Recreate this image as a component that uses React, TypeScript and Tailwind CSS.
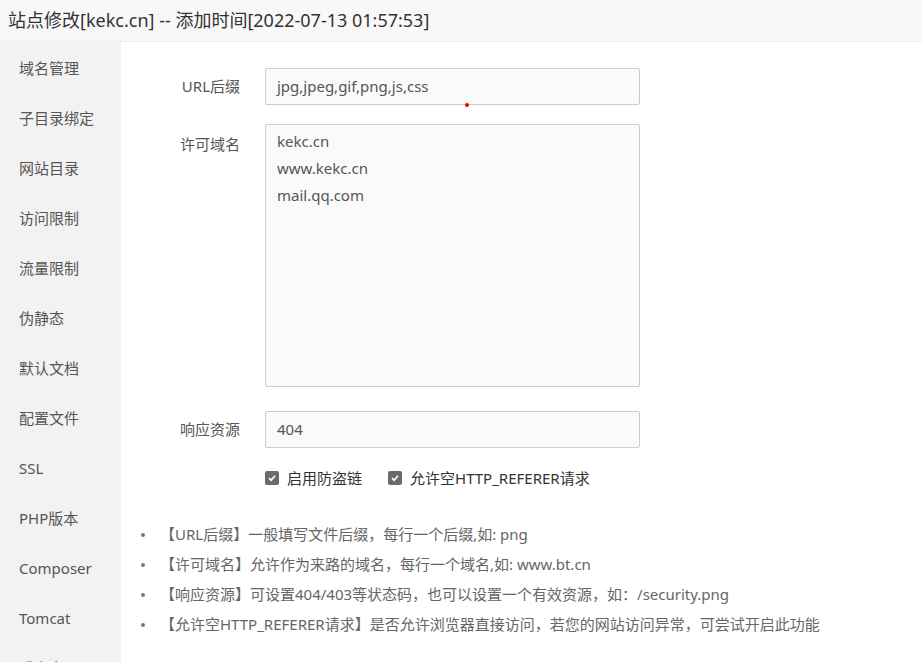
import React from 'react';

const menu = ['域名管理', '子目录绑定', '网站目录', '访问限制', '流量限制', '伪静态', '默认文档', '配置文件', 'SSL', 'PHP版本', 'Composer', 'Tomcat', '重定向', '反向代理'];

const tips = [
  '【URL后缀】一般填写文件后缀，每行一个后缀,如: png',
  '【许可域名】允许作为来路的域名，每行一个域名,如: www.bt.cn',
  '【响应资源】可设置404/403等状态码，也可以设置一个有效资源，如：/security.png',
  '【允许空HTTP_REFERER请求】是否允许浏览器直接访问，若您的网站访问异常，可尝试开启此功能',
];

const Check = () => (
  <span className="w-[14px] h-[14px] rounded-[2px] bg-[#6b6b6b] flex items-center justify-center">
    <svg width="10" height="10" viewBox="0 0 10 10">
      <path d="M2 5.2 L4.1 7.2 L8 2.8" fill="none" stroke="#fff" strokeWidth="1.7" />
    </svg>
  </span>
);

const App: React.FC = () => {
  return (
    <div className="w-[922px] h-[662px] overflow-hidden bg-white text-[#333]" style={{ fontFamily: '"Noto Sans", "Noto Sans CJK SC", sans-serif' }}>
      <div className="h-[42px] bg-[#f8f8f8] border-b border-[#eee] px-2 flex items-center text-[18px] text-[#333]">
        站点修改[kekc.cn] -- 添加时间[2022-07-13 01:57:53]
      </div>
      <div className="flex">
        <div className="w-[121px] shrink-0 bg-[#f2f2f2] pt-[14px] h-[620px] overflow-hidden">
          {menu.map((m) => (
            <div key={m} className="h-[50px] pl-[19px] text-[15px] text-[#555] leading-[24px]">{m}</div>
          ))}
        </div>
        <div className="flex-1 pt-[26px] text-[15px]">
          <div className="flex items-center">
            <div className="w-[119px] text-right text-[#555]">URL后缀</div>
            <div className="relative ml-[25px] w-[375px] h-[37px] border border-[#ccc] rounded-[2px] bg-[#fafafa] px-[11px] flex items-center text-[#555]">
              jpg,jpeg,gif,png,js,css
              <span className="absolute left-[199px] top-[34px] w-[4px] h-[4px] rounded-full bg-[#e00]" />
            </div>
          </div>
          <div className="flex mt-[19px]">
            <div className="w-[119px] text-right text-[#555] pt-[9px]">许可域名</div>
            <div className="ml-[25px] w-[375px] h-[263px] border border-[#ccc] rounded-[2px] bg-[#fafafa] px-[11px] pt-[3px] text-[#555] leading-[27px]">
              <div>kekc.cn</div>
              <div>www.kekc.cn</div>
              <div>mail.qq.com</div>
            </div>
          </div>
          <div className="flex items-center mt-[24px]">
            <div className="w-[119px] text-right text-[#555]">响应资源</div>
            <div className="ml-[25px] w-[375px] h-[37px] border border-[#ccc] rounded-[2px] bg-[#fafafa] px-[11px] flex items-center text-[#555]">
              404
            </div>
          </div>
          <div className="flex items-center ml-[144px] mt-[19px] text-[#333]">
            <Check />
            <span className="ml-[8px]">启用防盗链</span>
            <span className="ml-[26px]"><Check /></span>
            <span className="ml-[8px]">允许空HTTP_REFERER请求</span>
          </div>
          <ul className="mt-[30px] pl-[20px] text-[#666]">
            {tips.map((t) => (
              <li key={t} className="h-[30px] flex items-center">
                <span className="w-[4px] h-[4px] rounded-full bg-[#777] mr-[15px]" />
                {t}
              </li>
            ))}
          </ul>
        </div>
      </div>
    </div>
  );
};

export default App;
